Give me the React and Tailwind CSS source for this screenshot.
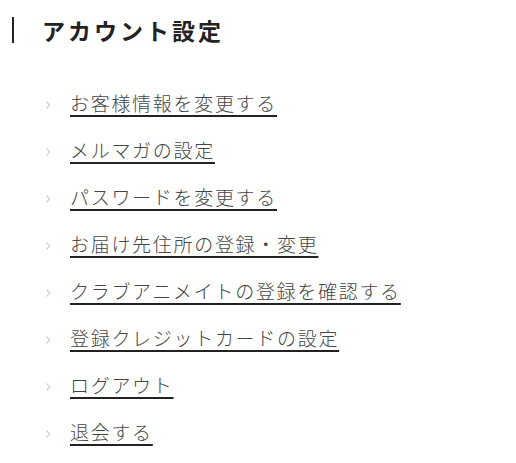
import React from 'react';

const items = [
  'お客様情報を変更する',
  'メルマガの設定',
  'パスワードを変更する',
  'お届け先住所の登録・変更',
  'クラブアニメイトの登録を確認する',
  '登録クレジットカードの設定',
  'ログアウト',
  '退会する',
];

export default function App() {
  return (
    <div className="min-h-screen bg-white font-['Noto_Sans_CJK_JP',sans-serif]">
      {/* Heading */}
      <div className="flex items-center pt-[17px] pl-3">
        <span className="block w-[2px] h-[26px] bg-[#222]"></span>
        <h1 className="ml-[28px] text-[23px] leading-[26px] font-bold tracking-[3px] text-[#222]">
          アカウント設定
        </h1>
      </div>

      {/* Menu */}
      <ul className="mt-[47px] pl-[44px] flex flex-col gap-[21px]">
        {items.map((label) => (
          <li key={label} className="flex items-center h-[26px]">
            <svg width="8" height="10" viewBox="0 0 8 10" className="shrink-0 mt-[3px]">
              <path d="M2.5 1.5 L5.5 5 L2.5 8.5" fill="none" stroke="#c4c4c4" strokeWidth="1.1" />
            </svg>
            <a
              href="#"
              className="ml-[18px] text-[19px] leading-[26px] font-light tracking-[1.7px] text-[#444] underline decoration-[#222] decoration-2 underline-offset-[4px]"
            >
              {label}
            </a>
          </li>
        ))}
      </ul>
    </div>
  );
}
